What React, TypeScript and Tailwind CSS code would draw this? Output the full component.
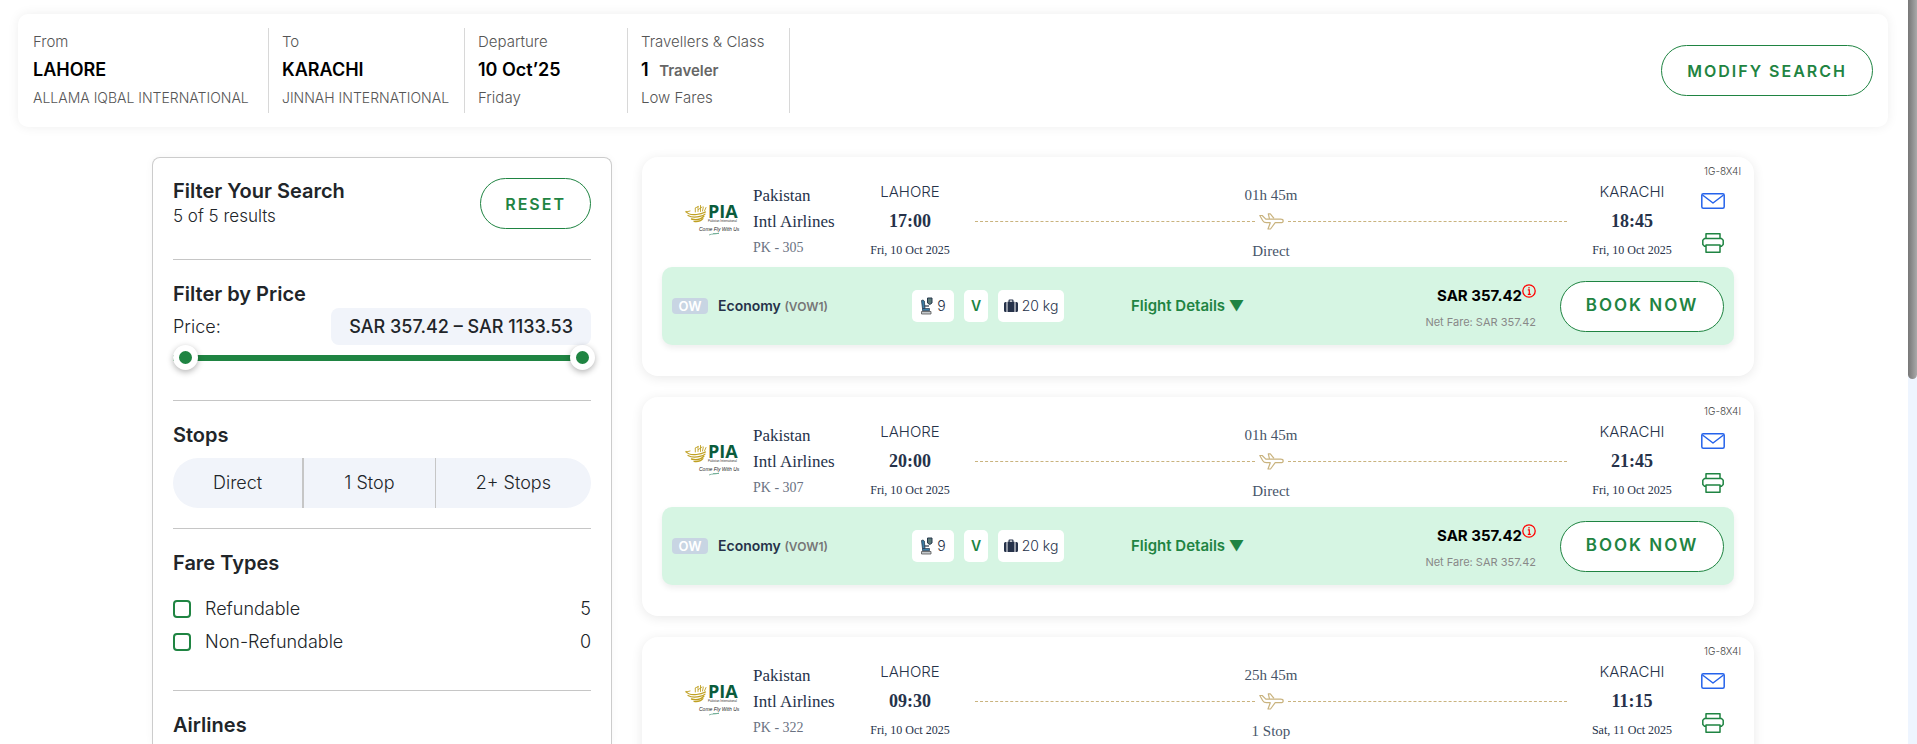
import type { ReactNode } from "react";

type Flight = {
  number: string;
  departTime: string;
  departDate: string;
  arriveTime: string;
  arriveDate: string;
  duration: string;
  stops: string;
};

const flights: Flight[] = [
  { number: "PK - 305", departTime: "17:00", departDate: "Fri, 10 Oct 2025", arriveTime: "18:45", arriveDate: "Fri, 10 Oct 2025", duration: "01h 45m", stops: "Direct" },
  { number: "PK - 307", departTime: "20:00", departDate: "Fri, 10 Oct 2025", arriveTime: "21:45", arriveDate: "Fri, 10 Oct 2025", duration: "01h 45m", stops: "Direct" },
  { number: "PK - 322", departTime: "09:30", departDate: "Fri, 10 Oct 2025", arriveTime: "11:15", arriveDate: "Sat, 11 Oct 2025", duration: "25h 45m", stops: "1 Stop" },
];

function PillButton({ children, className }: { children: ReactNode; className: string }) {
  return (
    <button
      type="button"
      className={`h-[51px] shrink-0 whitespace-nowrap rounded-full border border-[#1f8442] bg-white font-semibold tracking-[2px] text-[#1f8442] ${className}`}
    >
      {children}
    </button>
  );
}

function PiaLogo() {
  return (
    <svg viewBox="0 0 54 34" className="h-[34px] w-[54px] shrink-0 overflow-visible" role="img" aria-label="PIA">
      <g fill="none" stroke="#c0a022" strokeLinecap="round">
        <path d="M1 7.500c2 3 6 3.500 10.500 3c3-.3 6-1 9-2.500" strokeWidth="1.200" />
        <path d="M3 11.500c3 1.800 7.500 2 12 .9c2-.5 3.800-1.200 5-2.300" strokeWidth="1.200" />
        <path d="M6.500 15c4 1.300 9 .5 12.300-2.800" strokeWidth="1.500" />
        <path d="M9 17.500c3.500.6 7-.6 9-2.800" strokeWidth="1.200" />
        <path d="M1 8l4-1M10.300 8V4.500M13 7.500V2.500M15.500 7.500V1.500M10.300 4l3-1.500M13.500 5.500l3.500-2.500M17.500 7l.8-4M19.500 7l1.500-3.500" strokeWidth=".9" />
      </g>
      <text x="23" y="14" fontFamily="Open Sans, sans-serif" fontWeight="700" fontSize="18" fill="#0a5c3c">PIA</text>
      <text x="23" y="18" fontFamily="Liberation Sans, sans-serif" fontSize="3" fill="#333">Pakistan International</text>
      <text x="14" y="27" fontFamily="Liberation Sans, sans-serif" fontStyle="italic" fontSize="5" fill="#222">Come Fly With Us</text>
      <path d="M24 31c3-1.500 6-.5 10-2M28 29.500h6" fill="none" stroke="#6aa890" strokeWidth=".8" />
    </svg>
  );
}

function PlaneIcon() {
  return (
    <svg viewBox="0 0 25 17" className="h-[17px] w-[25px]" fill="none" stroke="#c9b37e" strokeWidth="1.200" strokeLinejoin="round" aria-hidden="true">
      <path d="M.8 2.500h2.400l3.600 3.700h14.700c1.800 0 2.700.8 2.700 1.700s-1 1.800-2.700 1.800h-5.300L11.500 16H9l2.300-6.300H7.500C5.800 9.700 4.500 9 3.800 7.800z" />
      <path d="M10.500 5.800 9.300.8h2l3.700 4.500" />
    </svg>
  );
}

function MailIcon() {
  return (
    <svg viewBox="0 0 24 16" className="h-4 w-6" fill="none" stroke="#2563eb" strokeWidth="1.500" strokeLinejoin="round" aria-hidden="true">
      <rect x=".8" y=".8" width="22.400" height="14.400" rx="1.500" />
      <path d="M1.500 2 12 10 22.500 2" />
    </svg>
  );
}

function PrintIcon() {
  return (
    <svg viewBox="0 0 22 20" className="h-5 w-[22px]" fill="none" stroke="#1f8442" strokeWidth="1.500" strokeLinejoin="round" aria-hidden="true">
      <path d="M4 5.500V.8h14v4.700" />
      <path d="M4 13.200H2.500L.8 11.500V7.200l1.700-1.700h17l1.700 1.700v4.300l-1.700 1.700H18" />
      <path d="M4 12h14v7.200H4z" />
    </svg>
  );
}

function SeatIcon() {
  return (
    <svg viewBox="0 0 13 18" className="h-[18px] w-[13px]" aria-hidden="true">
      <path d="M1.500 3.500 3 3l1.300 1 .7 7.500H2.500z" fill="#3b7fa8" stroke="#26384d" strokeWidth=".8" />
      <path d="M2.500 11.500h7v2.200h-7z" fill="#3b7fa8" stroke="#26384d" strokeWidth=".7" />
      <path d="M4.500 9h4.500" stroke="#26384d" strokeWidth="1.200" />
      <path d="M1.500 14.500h9.500v2.500h-9.500z" fill="#c5c9cc" stroke="#555" strokeWidth=".8" />
      <path d="M7.500 1h4.500v5l-2.200 1.500L7.500 6z" fill="#5b7a78" stroke="#26384d" strokeWidth="1" />
    </svg>
  );
}

function BagIcon() {
  return (
    <svg viewBox="0 0 14 14" className="size-3.5" fill="#26324a" aria-hidden="true">
      <path d="M1.500 3H2.500V13H1.500Q0 13 0 11.500V4.500Q0 3 1.500 3ZM11.500 3h1Q14 3 14 4.500v7Q14 13 12.500 13h-1z" />
      <path d="M3.500 2.800h1V1.500Q4.500.5 5.500.5h3Q9.500.5 9.500 1.500v1.300h1V13h-7zM5.700 2.800h2.600V1.600H5.700z" fillRule="evenodd" />
    </svg>
  );
}

function InfoIcon() {
  return (
    <svg viewBox="0 0 14 14" className="size-3.5" aria-hidden="true">
      <circle cx="7" cy="7" r="6.200" fill="none" stroke="#f00" strokeWidth="1.300" />
      <path d="M5.800 5.800h1.500v4.200M5.800 10.300h3M7 3v1.500" fill="none" stroke="#f00" strokeWidth="1.200" />
    </svg>
  );
}

function TripField({ label, value, note, className, noteClassName = "" }: { label: string; value: ReactNode; note: string; className: string; noteClassName?: string }) {
  return (
    <div className={`flex flex-col whitespace-nowrap border-r border-[#d8d8d8] pb-px pr-3 text-[15px] font-light leading-7 text-[#555] ${className}`}>
      <span>{label}</span>
      <span className="text-lg font-semibold leading-7 text-black">{value}</span>
      <span className={noteClassName}>{note}</span>
    </div>
  );
}

function TripSummary() {
  return (
    <header className="ml-[18px] mr-5 mt-3.5 flex items-center justify-between rounded-[10px] bg-white px-[15px] py-3.5 shadow-[0_0_12px_rgba(0,0,0,0.07)]">
      <div className="flex gap-[13px]">
        <TripField label="From" value="LAHORE" note="ALLAMA IQBAL INTERNATIONAL" className="w-[236px]" noteClassName="text-sm leading-7" />
        <TripField label="To" value="KARACHI" note="JINNAH INTERNATIONAL" className="w-[183px]" noteClassName="text-sm leading-7" />
        <TripField label="Departure" value="10 Oct’25" note="Friday" className="w-[150px]" />
        <TripField
          label="Travellers & Class"
          value={<>1 <span className="ml-1.5 text-[15px] leading-none text-[#666]">Traveler</span></>}
          note="Low Fares"
          className="w-[149px]"
        />
      </div>
      <PillButton className="px-[25px] text-base">MODIFY SEARCH</PillButton>
    </header>
  );
}

const thumb =
  "pointer-events-none absolute top-0 h-[25px] appearance-none bg-transparent [&::-webkit-slider-thumb]:pointer-events-auto [&::-webkit-slider-thumb]:h-[25px] [&::-webkit-slider-thumb]:w-[25px] [&::-webkit-slider-thumb]:appearance-none [&::-webkit-slider-thumb]:rounded-full [&::-webkit-slider-thumb]:border-[6px] [&::-webkit-slider-thumb]:border-white [&::-webkit-slider-thumb]:bg-[#1f8442] [&::-webkit-slider-thumb]:shadow-[0_2px_6px_rgba(0,0,0,0.3)]";

function FilterPanel() {
  return (
    <aside className="w-[460px] shrink-0 rounded-t-lg border border-b-0 border-[#ccc] px-5 pt-5 text-lg font-light leading-6 text-[#212529] shadow-[0_0_8px_rgba(0,0,0,0.04)]">
      <div className="flex h-[82px] items-start justify-between border-b border-[#c6c6c6]">
        <div>
          <h2 className="text-xl font-semibold leading-[26px]">Filter Your Search</h2>
          <p className="text-[17px] leading-6">5 of 5 results</p>
        </div>
        <PillButton className="px-6 text-base">RESET</PillButton>
      </div>

      <section className="h-[141px] border-b border-[#c6c6c6] pt-5">
        <h2 className="text-xl font-semibold leading-7">Filter by Price</h2>
        <div className="flex items-center justify-between">
          <span>Price:</span>
          <output className="rounded-lg bg-[#f1f4fa] px-[18px] py-[6px] font-medium leading-[25px]">SAR 357.42 – SAR 1133.53</output>
        </div>
        <div className="relative flex h-[25px] items-center">
          <div className="h-1.5 w-full bg-[#1f8442]" />
          <input type="range" aria-label="Minimum price" min="357" max="1133" defaultValue="357" className={`${thumb} left-0 w-full`} />
          <input type="range" aria-label="Maximum price" min="357" max="1133" defaultValue="1133" className={`${thumb} left-0 w-[422px]`} />
        </div>
      </section>

      <section className="h-32 border-b border-[#c6c6c6] pt-5">
        <h2 className="text-xl font-semibold leading-7">Stops</h2>
        <div className="mt-[9px] flex h-[50px] overflow-hidden rounded-full bg-[#f1f4fa]">
          <button type="button" className="flex-auto border-r-2 border-[#c6c6c6]">Direct</button>
          <button type="button" className="flex-auto border-r border-[#c6c6c6]">1 Stop</button>
          <button type="button" className="flex-auto">2+ Stops</button>
        </div>
      </section>

      <section className="h-[162px] border-b border-[#c6c6c6] pt-5">
        <h2 className="mb-[15px] text-xl font-semibold leading-7">Fare Types</h2>
        {[["Refundable", 5], ["Non-Refundable", 0]].map(([name, count]) => (
          <div key={name} className="flex h-[33px] items-center justify-between">
            <label className="flex items-center gap-3.5">
              <input type="checkbox" className="size-[18px] appearance-none rounded border-2 border-[#1f8442] bg-white checked:bg-[#1f8442]" />
              {name}
            </label>
            <span>{count}</span>
          </div>
        ))}
      </section>

      <section className="pt-5">
        <h2 className="text-xl font-semibold leading-7">Airlines</h2>
      </section>
    </aside>
  );
}

function Endpoint({ city, time, date }: { city: string; time: string; date: string }) {
  return (
    <div className="flex w-[90px] shrink-0 flex-col items-center whitespace-nowrap font-['Liberation_Serif',serif] text-[#26324a]">
      <span className="font-[Inter,sans-serif] text-[15px] font-light leading-7">{city}</span>
      <span className="text-lg font-bold leading-[30px]">{time}</span>
      <span className="text-xs leading-7">{date}</span>
    </div>
  );
}

function FlightCard({ flight }: { flight: Flight }) {
  return (
    <article className="relative h-[219px] shrink-0 rounded-2xl bg-white px-5 shadow-[0_2px_12px_rgba(0,0,0,0.09)]">
      <span className="absolute right-[13px] top-1.5 text-[10px] font-light leading-4 text-[#444]">1G-8X4I</span>
      <div className="flex h-[110px] items-start pl-[23px]">
        <div className="mt-[47px]">
          <PiaLogo />
        </div>
        <div className="ml-3.5 mt-[26px] w-[112px] whitespace-nowrap font-['Liberation_Serif',serif] text-[17px] leading-[26px] text-[#26324a]">
          <p>Pakistan<br />Intl Airlines</p>
          <p className="text-sm leading-[26px] text-gray-500">{flight.number}</p>
        </div>
        <div className="mt-[21px]">
          <Endpoint city="LAHORE" time={flight.departTime} date={flight.departDate} />
        </div>
        <div className="mx-5 mt-[26px] flex flex-1 flex-col items-center font-['Liberation_Serif',serif] text-[15px] leading-6 text-[#475569]">
          <span>{flight.duration}</span>
          <div className="flex h-7 w-full items-center gap-1">
            <span className="flex-1 border-t border-dashed border-[#c9b37e]" />
            <PlaneIcon />
            <span className="flex-1 border-t border-dashed border-[#c9b37e]" />
          </div>
          <span className="mt-1">{flight.stops}</span>
        </div>
        <div className="mt-[21px]">
          <Endpoint city="KARACHI" time={flight.arriveTime} date={flight.arriveDate} />
        </div>
        <div className="ml-6 mr-[9px] mt-9 flex flex-col items-center gap-6">
          <button type="button" aria-label="Email itinerary"><MailIcon /></button>
          <button type="button" aria-label="Print itinerary"><PrintIcon /></button>
        </div>
      </div>

      <div className="flex h-[78px] items-center rounded-[10px] bg-[#d6f5e3] px-2.5 shadow-[0_3px_6px_rgba(0,0,0,0.07)]">
        <div className="flex w-[240px] items-center gap-2.5 whitespace-nowrap">
          <span className="w-9 rounded bg-[#c8d5e3] text-center text-[13px] font-semibold leading-4 text-white">OW</span>
          <span className="text-sm font-semibold text-[#26324a]">
            Economy <span className="text-xs text-[#777]">(VOW1)</span>
          </span>
        </div>
        <div className="flex gap-2.5 text-sm font-light text-[#26324a]">
          <span className="flex h-8 w-[42px] items-center justify-center gap-1 rounded-[5px] bg-white"><SeatIcon />9</span>
          <span className="flex h-8 w-6 items-center justify-center rounded-[5px] bg-white font-semibold text-[#1f8442]">V</span>
          <span className="flex h-8 w-[66px] items-center justify-center gap-1 whitespace-nowrap rounded-[5px] bg-white"><BagIcon />20 kg</span>
        </div>
        <button type="button" className="ml-[67px] whitespace-nowrap text-[15px] font-semibold text-[#1f8442]">Flight Details ▼</button>
        <div className="ml-auto mr-6 flex flex-col items-end gap-0.5 whitespace-nowrap pt-1.5">
          <span className="flex items-start text-[15px] font-bold leading-6 text-black">SAR 357.42<InfoIcon /></span>
          <span className="text-[11px] leading-6 text-[#888]">Net Fare: SAR 357.42</span>
        </div>
        <PillButton className="w-[164px] text-[17px]">BOOK NOW</PillButton>
      </div>
    </article>
  );
}

export default function App() {
  return (
    <div className="flex h-screen overflow-hidden bg-white font-[Inter,sans-serif]">
      <div className="flex min-w-0 flex-1 flex-col">
        <TripSummary />
        <main className="mt-[30px] flex min-h-0 flex-1 gap-[30px] pl-[152px] pr-[154px]">
          <FilterPanel />
          <div className="flex min-w-0 flex-1 flex-col gap-[21px]">
            {flights.map((flight) => (
              <FlightCard key={flight.number} flight={flight} />
            ))}
          </div>
        </main>
      </div>
      <div className="w-[9px] shrink-0 bg-[#eef5ff]" aria-hidden="true">
        <div className="h-[51%] rounded-b-full bg-linear-to-r from-[#777] to-[#aaa]" />
      </div>
    </div>
  );
}
